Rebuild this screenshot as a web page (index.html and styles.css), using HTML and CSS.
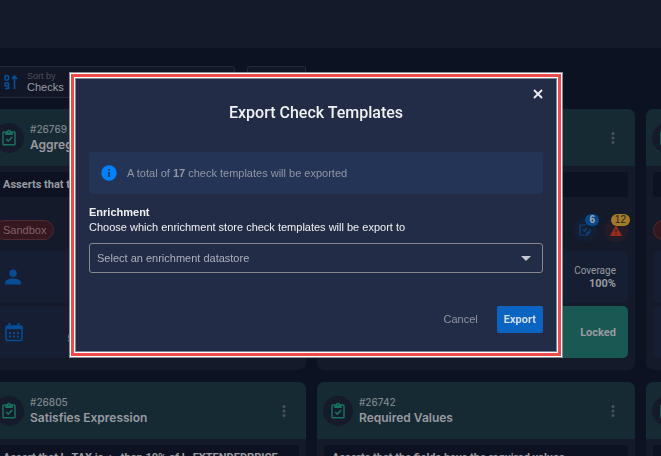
FILE: index.html
```html
<!DOCTYPE html>
<html lang="en">
<head>
<meta charset="utf-8">
<title>Export Check Templates</title>
<link rel="stylesheet" href="styles.css">
</head>
<body>
<svg class="defs" aria-hidden="true">
  <symbol id="clipboard" viewBox="0 0 24 24"><path fill="currentColor" d="M19 3h-4.2a3 3 0 0 0-5.6 0H5a2 2 0 0 0-2 2v15a2 2 0 0 0 2 2h14a2 2 0 0 0 2-2V5a2 2 0 0 0-2-2zM5 20V5h2v3h10V5h2v15zM12 3a1 1 0 1 1 0 2 1 1 0 0 1 0-2zM7.500 14l1.500-1.500 2 2 4.500-4.500L17 11.500l-6 6z"/></symbol>
  <symbol id="dots" viewBox="0 0 4 12"><g fill="currentColor"><circle cx="2" cy="1.600" r="1.500"/><circle cx="2" cy="6" r="1.500"/><circle cx="2" cy="10.400" r="1.500"/></g></symbol>
</svg>
<header class="topbar"></header>
<main>
  <div class="toolbar">
    <button class="sort">
      <svg width="14" height="16" viewBox="0 0 14 16" fill="none" stroke="currentColor" stroke-width="1.600"><rect x="1" y="1.500" width="3.500" height="4.500" rx="1"/><rect x="1" y="9" width="3.500" height="3" rx=".5"/><path d="M4.500 12v2.500H1M10.500 15V3M8 5l2.500-3L13 5"/></svg>
      <span><small>Sort by</small>Checks</span>
    </button>
    <button class="filter" aria-label="Filter"></button>
  </div>
  <div class="cards">
    <article class="card">
      <header class="head"><span class="disc"><svg width="18" height="18"><use href="#clipboard"/></svg></span><div class="name"><small>#26769</small><h2>Aggregation</h2></div><button class="more" aria-label="More"><svg width="4" height="12"><use href="#dots"/></svg></button></header>
      <div class="body">
        <p class="rule">Asserts that the total matches</p>
        <div class="tags"><span class="tag">Sandbox</span></div>
        <div class="cells">
          <div class="cell"><svg width="18" height="18" viewBox="0 0 24 24" fill="currentColor"><circle cx="12" cy="7" r="5"/><path d="M1.500 22v-2.500c0-3.500 5-5.500 10.500-5.500s10.500 2 10.500 5.500V22z"/></svg></div>
          <div class="cell"></div>
          <div class="cell"><svg width="20" height="20" viewBox="0 0 20 20" fill="none" stroke="currentColor"><rect x="2" y="4" width="16" height="14.500" rx="1.500" stroke-width="1.600"/><path stroke-width="3.500" d="M2 5.500h16"/><path stroke-width="2" d="M5.500 1v4M14.500 1v4"/><path stroke-width="2" stroke-dasharray="2 2" d="M5 11h10M5 14.500h10"/></svg><strong class="old">5 months ago</strong></div>
          <div class="cell"></div>
        </div>
      </div>
    </article>
    <article class="card">
      <header class="head"><span class="disc"><svg width="18" height="18"><use href="#clipboard"/></svg></span><div class="name"></div><button class="more" aria-label="More"><svg width="4" height="12"><use href="#dots"/></svg></button></header>
      <div class="body">
        <p class="rule"></p>
        <div class="tags end">
          <span class="stat task"><svg width="12" height="12" viewBox="0 0 12 12" fill="none" stroke="currentColor" stroke-width="1.200"><path d="M7 1H2a1 1 0 0 0-1 1v8a1 1 0 0 0 1 1h6l3-3V5M8 11V8h3M4 5.500l1.500 1.500L8 4"/></svg><b>6</b></span>
          <span class="stat warn"><svg width="12" height="11" viewBox="0 0 12 11"><path fill="currentColor" d="M6 0l6 11H0z"/><path stroke="#241d2c" stroke-width="1.200" d="M6 4v3M6 8v1.300"/></svg><b>12</b></span>
        </div>
        <div class="cells">
          <div class="cell"></div>
          <div class="cell right"><span>Coverage</span><strong>100%</strong></div>
          <div class="cell"></div>
          <div class="cell right locked"><strong>Locked</strong></div>
        </div>
      </div>
    </article>
    <article class="card">
      <header class="head"><span class="disc"><svg width="18" height="18"><use href="#clipboard"/></svg></span></header>
      <div class="body">
        <p class="rule"></p>
        <div class="tags"><span class="tag empty"></span></div>
        <div class="cells"><div class="cell"></div><div class="cell"></div><div class="cell"></div><div class="cell"></div></div>
      </div>
    </article>
    <article class="card">
      <header class="head"><span class="disc"><svg width="18" height="18"><use href="#clipboard"/></svg></span><div class="name"><small>#26805</small><h2>Satisfies Expression</h2></div><button class="more" aria-label="More"><svg width="4" height="12"><use href="#dots"/></svg></button></header>
      <div class="body"><p class="rule">Assert that L_TAX is &lt;= than 10% of L_EXTENDEDPRICE</p></div>
    </article>
    <article class="card">
      <header class="head"><span class="disc"><svg width="18" height="18"><use href="#clipboard"/></svg></span><div class="name"><small>#26742</small><h2>Required Values</h2></div><button class="more" aria-label="More"><svg width="4" height="12"><use href="#dots"/></svg></button></header>
      <div class="body"><p class="rule">Asserts that the fields have the required values</p></div>
    </article>
    <article class="card">
      <header class="head"><span class="disc"><svg width="18" height="18"><use href="#clipboard"/></svg></span></header>
      <div class="body"><p class="rule"></p></div>
    </article>
  </div>
</main>
<div class="overlay">
  <section class="modal" role="dialog" aria-labelledby="title">
    <button class="close" aria-label="Close"><svg width="10" height="10" viewBox="0 0 10 10"><path stroke="currentColor" stroke-width="1.800" d="M1 1l8 8M9 1L1 9"/></svg></button>
    <h1 id="title">Export Check Templates</h1>
    <div class="notice">
      <svg width="16" height="16" viewBox="0 0 16 16"><circle cx="8" cy="8" r="7.700" fill="#0380fb"/><path stroke="#243456" stroke-width="1.600" d="M8 7v5M8 4v1.600"/></svg>
      <p>A total of <b>17</b> check templates will be exported</p>
    </div>
    <label for="store"><b>Enrichment</b>Choose which enrichment store check templates will be export to</label>
    <div class="field">
      <select id="store"><option>Select an enrichment datastore</option></select>
      <svg class="caret" width="10" height="5" viewBox="0 0 10 5"><path fill="#c3c7d0" d="M0 0h10L5 5z"/></svg>
    </div>
    <footer class="actions"><button class="cancel">Cancel</button><button class="export">Export</button></footer>
  </section>
</div>
</body>
</html>
```

FILE: styles.css
```css
* { box-sizing: border-box; }
html, body { height: 100%; }
body {
  margin: 0;
  overflow: hidden;
  background: #0c1221;
  color: #999ba1;
  font-family: "Liberation Sans", sans-serif;
  font-size: 11px;
  line-height: 15px;
}
h1, h2, p { margin: 0; }
button { border: 0; padding: 0; background: none; color: inherit; font: inherit; }
svg { display: block; flex: none; }
main { overflow: hidden; height: calc(100% - 48px); }
.defs { position: absolute; width: 0; height: 0; }
.topbar { height: 48px; background: #141a29; }
.toolbar { display: flex; gap: 12px; padding-top: 18px; }
.sort, .filter { height: 32px; border: 1px solid #242a39; background: #111726; }
.sort {
  display: flex;
  align-items: center;
  gap: 9px;
  width: 240px;
  margin-left: -5px;
  padding-left: 8px;
  border-radius: 3px;
  text-align: left;
  line-height: 12px;
}
.sort svg { color: #064f9c; }
.sort small { display: block; font-size: 9px; line-height: 10px; color: #4d515c; }
.filter { width: 59px; border-radius: 3px; }
.cards {
  display: grid;
  grid-template-columns: repeat(3, 47.25%);
  gap: 12px 11px;
  margin: 11px 0 0 -12px;
}
.card { border-radius: 7px; background: #141a29; overflow: hidden; }
.head { display: flex; align-items: center; height: 57px; padding: 0 20px 0 6px; background: #162a34; }
.disc {
  display: grid;
  place-items: center;
  width: 30px;
  height: 30px;
  border-radius: 50%;
  background: #151b2a;
  color: #17725f;
}
.name { flex: 1; padding-left: 6px; font-family: Inter, sans-serif; }
.name small { display: block; font-size: 10px; font-weight: 500; line-height: 14px; color: #7b858b; }
.name h2 { font-size: 12px; font-weight: 600; line-height: 18px; }
.more { color: #4a5157; }
.body { padding: 6px 7px 12px; }
.rule {
  height: 25px;
  padding-left: 8px;
  border-radius: 3px;
  background: #0c1221;
  font-family: Roboto, sans-serif;
  font-weight: 700;
  line-height: 25px;
  white-space: nowrap;
  overflow: hidden;
}
.tags { display: flex; align-items: center; height: 54px; padding-top: 12px; }
.end { justify-content: flex-end; gap: 7px; }
.tag {
  padding: 0 7px;
  border: 1px solid #4f2a31;
  border-radius: 10px;
  background: #34171f;
  color: #81636a;
  line-height: 18px;
}
.empty { width: 60px; height: 20px; }
.stat { position: relative; display: grid; place-items: center; width: 24px; height: 24px; border-radius: 50%; }
.stat b {
  position: absolute;
  top: -4px;
  right: -2px;
  padding: 0 4px;
  border-radius: 6px;
  font-size: 10px;
  line-height: 12px;
}
.task { background: #131e33; color: #0b4788; }
.task b { background: #08488c; color: #a5aab2; }
.warn { background: #211c28; color: #982d1c; }
.warn b { background: #a37a29; color: #2b271d; font-weight: 500; }
.cells { display: grid; grid-template-columns: 1fr 1fr; row-gap: 3px; }
.cell {
  display: flex;
  align-items: center;
  justify-content: space-between;
  height: 52px;
  padding: 0 12px 0 9px;
  background: #151e33;
  font-family: Roboto, sans-serif;
  font-size: 10px;
}
.cell:nth-child(odd) { border-radius: 5px 0 0 5px; }
.cell:nth-child(even) { border-radius: 0 5px 5px 0; }
.cell svg { color: #074c95; }
.cell strong { font-size: 11px; font-weight: 700; }
.old { padding-top: 12px; }
.right { flex-direction: column; align-items: flex-end; justify-content: center; line-height: 13px; }
.cell.locked { background: #195853; }
.overlay { position: fixed; inset: 0; padding: 74px 100px 0 71px; }
.modal {
  position: relative;
  padding: 24px 15px 20px;
  border: 3px solid #ee4a49;
  background: #232c46;
  color: #f0f1f4;
  box-shadow: 0 0 0 1px #fff, 0 0 0 2px #8a8d94, inset 0 0 0 1px #fff, inset 0 0 0 2px #7d8593;
}
.close { position: absolute; top: 12px; right: 15px; }
h1 { font-family: Roboto, sans-serif; font-size: 16px; font-weight: 500; line-height: 24px; text-align: center; }
.notice {
  display: flex;
  align-items: center;
  gap: 10px;
  height: 42px;
  margin: 27px 0 11px;
  padding: 0 12px;
  border-radius: 3px;
  background: #243456;
  color: #9197a5;
}
label, label b { display: block; }
.field { display: flex; align-items: center; margin-top: 8px; }
select {
  appearance: none;
  flex: 1;
  height: 30px;
  padding: 0 30px 0 7px;
  border: 1px solid #85878d;
  border-radius: 3px;
  background: #232c46;
  color: #adb1bb;
  font: inherit;
}
.caret { margin-left: -22px; margin-right: 12px; pointer-events: none; position: relative; }
.actions { display: flex; justify-content: flex-end; align-items: center; gap: 19px; margin-top: 33px; }
.cancel { color: #91959f; }
.export { height: 27px; padding: 0 7px; border-radius: 2px; background: #0b64c1; color: #d3dfef; font-family: Roboto, sans-serif; font-weight: 700; }
```
